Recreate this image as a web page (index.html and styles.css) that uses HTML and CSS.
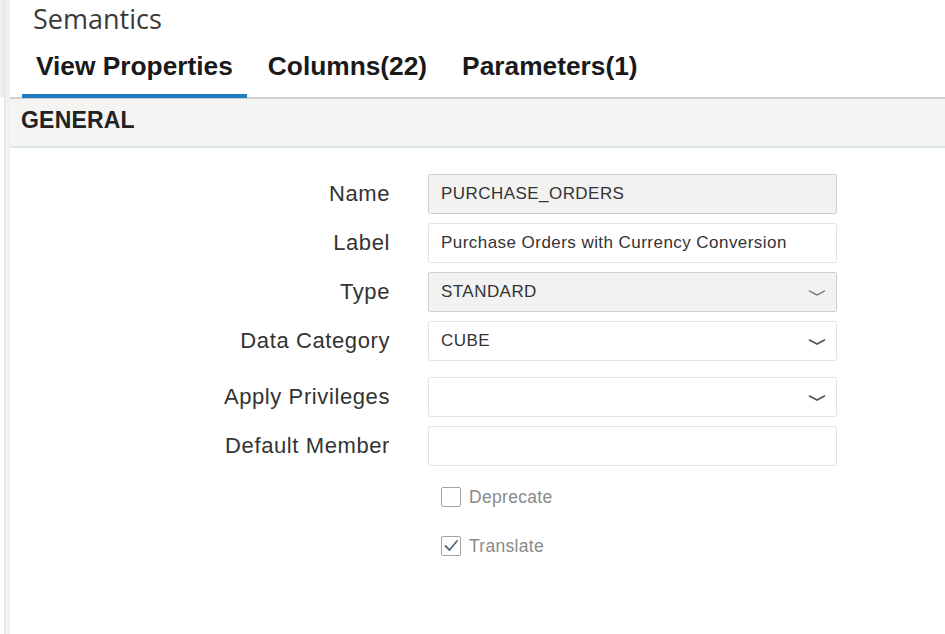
FILE: index.html
```html
<!DOCTYPE html>
<html lang="en">
<head>
<meta charset="utf-8">
<title>Semantics</title>
<link rel="stylesheet" href="styles.css">
</head>
<body>
<div class="app">
  <div class="rail-outer"></div>
  <div class="rail"></div>
  <main class="main">
    <h1 class="title">Semantics</h1>
    <nav class="tabs">
      <div class="tab active">View Properties</div>
      <div class="tab">Columns(22)</div>
      <div class="tab">Parameters(1)</div>
    </nav>
    <div class="section-head">GENERAL</div>
    <form class="form">
      <label class="lbl">Name</label>
      <div class="field readonly">PURCHASE_ORDERS</div>

      <label class="lbl">Label</label>
      <div class="field">Purchase Orders with Currency Conversion</div>

      <label class="lbl">Type</label>
      <div class="field readonly select">STANDARD
        <svg class="chev" width="18" height="8" viewBox="0 0 18 8"><path d="M1.5 2 L9 6 L16.5 2" fill="none" stroke="#6a6a6a" stroke-width="1.4" stroke-linecap="round"/></svg>
      </div>

      <label class="lbl">Data Category</label>
      <div class="field select">CUBE
        <svg class="chev" width="18" height="8" viewBox="0 0 18 8"><path d="M1.5 2 L9 6 L16.5 2" fill="none" stroke="#555" stroke-width="1.6" stroke-linecap="round"/></svg>
      </div>

      <label class="lbl low">Apply Privileges</label>
      <div class="field select low">
        <svg class="chev" width="18" height="8" viewBox="0 0 18 8"><path d="M1.5 2 L9 6 L16.5 2" fill="none" stroke="#555" stroke-width="1.6" stroke-linecap="round"/></svg>
      </div>

      <label class="lbl">Default Member</label>
      <div class="field"></div>

      <div class="checks">
        <div class="check"><span class="box"></span><span class="ctext">Deprecate</span></div>
        <div class="check"><span class="box"><svg width="18" height="18" viewBox="0 0 18 18"><path d="M3.5 9 L7.5 13 L15 4" fill="none" stroke="#56697f" stroke-width="1.8" stroke-linecap="round" stroke-linejoin="round"/></svg></span><span class="ctext">Translate</span></div>
      </div>
    </form>
  </main>
</div>
</body>
</html>
```
FILE: styles.css
```css
* { box-sizing: border-box; }
html, body { margin: 0; padding: 0; background: #ffffff; }
body {
  width: 945px;
  height: 634px;
  overflow: hidden;
  font-family: "Liberation Sans", Arial, sans-serif;
  color: #333;
}
.app {
  display: flex;
  height: 634px;
}
.rail-outer {
  width: 4px;
  background: linear-gradient(to bottom, #eeeeee 0, #eeeeee 97px, #ffffff 97px);
}
.rail {
  width: 6px;
  background: #eef1f4;
  border-left: 1px solid #e0e3e6;
}
.main {
  flex: 1;
  display: flex;
  flex-direction: column;
}
.title {
  margin: 0;
  padding: 2px 0 0 23px;
  height: 38px;
  font-family: "Open Sans", sans-serif;
  font-weight: 400;
  font-size: 27px;
  line-height: 34px;
  color: #3a3a3a;
}
.tabs {
  display: flex;
  padding-left: 12px;
  gap: 7px;
  height: 61px;
  border-bottom: 2px solid #cfcfcf;
}
.tab {
  padding: 12px 14px 0;
  font-size: 26.3px;
  font-weight: 700;
  color: #1a1a1a;
  line-height: 32px;
  border-bottom: 4px solid transparent;
  margin-bottom: -1px;
}
.tab.active {
  border-bottom-color: #1b7cc4;
}
.section-head {
  height: 49px;
  background: #f4f5f3;
  border-bottom: 2px solid #dbe3eb;
  padding-left: 11px;
  font-size: 23px;
  letter-spacing: 0.2px;
  font-weight: 700;
  color: #222;
  line-height: 42px;
}
.form {
  display: grid;
  grid-template-columns: 380px 409px;
  grid-template-rows: 40px 40px 40px 40px 47px 40px auto;
  column-gap: 38px;
  row-gap: 9px;
  padding-top: 26px;
}
.lbl {
  text-align: right;
  font-size: 22px;
  letter-spacing: 0.6px;
  line-height: 40px;
  color: #333;
}
.low {
  align-self: end;
  height: 40px;
}
.field {
  position: relative;
  border: 1px solid #e4e4e4;
  border-radius: 2px;
  background: #fff;
  padding-left: 12px;
  font-size: 17px;
  letter-spacing: 0.45px;
  line-height: 38px;
  color: #333;
}
.field.readonly {
  background: #f2f2f2;
  border-color: #cfcfcf;
}
.chev {
  position: absolute;
  right: 10px;
  top: 16px;
}
.checks {
  grid-column: 2;
  display: flex;
  flex-direction: column;
  gap: 29px;
  padding: 12px 0 0 13px;
}
.check {
  display: flex;
  align-items: center;
  gap: 8px;
  height: 20px;
}
.box {
  width: 20px;
  height: 20px;
  border: 1.5px solid #a3a3a3;
  border-radius: 2px;
  background: #fff;
  display: flex;
  align-items: center;
  justify-content: center;
}
.ctext {
  font-size: 17.5px;
  letter-spacing: 0.3px;
  color: #8a8a8a;
}
```
